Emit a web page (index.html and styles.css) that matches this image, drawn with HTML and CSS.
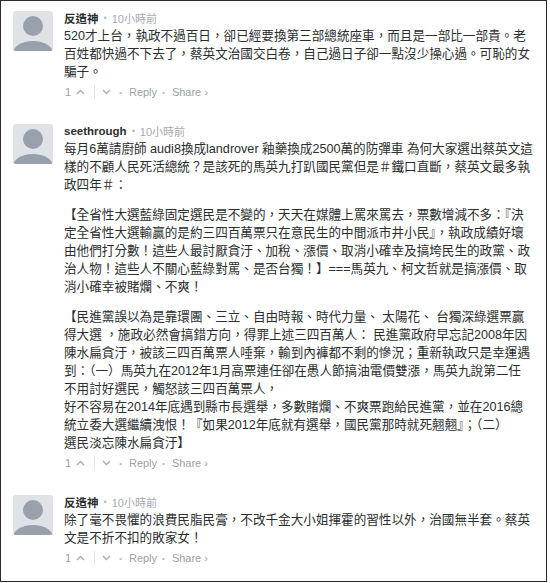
FILE: index.html
```html
<!DOCTYPE html>
<html lang="zh-Hant">
<head>
    <meta charset="UTF-8">
    <title>留言</title>
    <link rel="stylesheet" href="styles.css">
</head>
<body>

    <div class="frame">
        <div class="comment">
            <div class="avatar">
                <svg width="40" height="40" viewBox="0 0 40 40"><circle cx="20" cy="15" r="10"/><ellipse cx="20" cy="44" rx="21" ry="14"/></svg>
            </div>
            <div class="body">
                <div class="head"><span class="name">反造神</span><span class="dot">•</span><span class="time">10小時前</span></div>
                <div class="text">
                    <p>520才上台，執政不過百日，卻已經要換第三部總統座車，而且是一部比一部貴。老<br>百姓都快過不下去了，蔡英文治國交白卷，自己過日子卻一點沒少操心過。可恥的女<br>騙子。</p>
                </div>
                <div class="actions">
                    <span class="count">1</span>
                    <svg class="up" width="9" height="6" viewBox="0 0 9 6"><path d="M1 5 L4.5 1.5 L8 5"/></svg>
                    <span class="sep"></span>
                    <svg class="down" width="9" height="6" viewBox="0 0 9 6"><path d="M1 1 L4.5 4.5 L8 1"/></svg>
                    <span class="dot">•</span>
                    <span class="link">Reply</span>
                    <span class="dot">•</span>
                    <span class="link">Share ›</span>
                </div>
            </div>
        </div>

        <div class="comment">
            <div class="avatar">
                <svg width="40" height="40" viewBox="0 0 40 40"><circle cx="20" cy="15" r="10"/><ellipse cx="20" cy="44" rx="21" ry="14"/></svg>
            </div>
            <div class="body">
                <div class="head"><span class="name">seethrough</span><span class="dot">•</span><span class="time">10小時前</span></div>
                <div class="text">
                    <p>每月6萬請廚師 audi8換成landrover 釉藥換成2500萬的防彈車 為何大家選出蔡英文這<br>樣的不顧人民死活總統？是該死的馬英九打趴國民黨但是＃鐵口直斷，蔡英文最多執<br>政四年＃：</p>
                    <p>【全省性大選藍綠固定選民是不變的，天天在媒體上罵來罵去，票數增減不多：『決<br>定全省性大選輸贏的是約三四百萬票只在意民生的中間派市井小民』，執政成績好壞<br>由他們打分數！這些人最討厭貪汙、加稅、漲價、取消小確幸及搞垮民生的政黨、政<br>治人物！這些人不關心藍綠對罵、是否台獨！】===馬英九、柯文哲就是搞漲價、取<br>消小確幸被賭爛、不爽！</p>
                    <p>【民進黨誤以為是靠環團、三立、自由時報、時代力量、 太陽花、 台獨深綠選票贏<br>得大選 ，施政必然會搞錯方向，得罪上述三四百萬人： 民進黨政府早忘記2008年因<br>陳水扁貪汙，被該三四百萬票人唾棄，輸到內褲都不剩的慘況；重新執政只是幸運遇<br>到：（一）馬英九在2012年1月高票連任卻在愚人節搞油電價雙漲，馬英九說第二任<br>不用討好選民，觸怒該三四百萬票人，<br>好不容易在2014年底遇到縣市長選舉，多數賭爛、不爽票跑給民進黨，並在2016總<br>統立委大選繼續洩恨！『如果2012年底就有選舉，國民黨那時就死翹翹』；（二）<br>選民淡忘陳水扁貪汙】</p>
                </div>
                <div class="actions">
                    <span class="count">1</span>
                    <svg class="up" width="9" height="6" viewBox="0 0 9 6"><path d="M1 5 L4.5 1.5 L8 5"/></svg>
                    <span class="sep"></span>
                    <svg class="down" width="9" height="6" viewBox="0 0 9 6"><path d="M1 1 L4.5 4.5 L8 1"/></svg>
                    <span class="dot">•</span>
                    <span class="link">Reply</span>
                    <span class="dot">•</span>
                    <span class="link">Share ›</span>
                </div>
            </div>
        </div>

        <div class="comment">
            <div class="avatar">
                <svg width="40" height="40" viewBox="0 0 40 40"><circle cx="20" cy="15" r="10"/><ellipse cx="20" cy="44" rx="21" ry="14"/></svg>
            </div>
            <div class="body">
                <div class="head"><span class="name">反造神</span><span class="dot">•</span><span class="time">10小時前</span></div>
                <div class="text">
                    <p>除了毫不畏懼的浪費民脂民膏，不改千金大小姐揮霍的習性以外，治國無半套。蔡英<br>文是不折不扣的敗家女！</p>
                </div>
                <div class="actions">
                    <span class="count">1</span>
                    <svg class="up" width="9" height="6" viewBox="0 0 9 6"><path d="M1 5 L4.5 1.5 L8 5"/></svg>
                    <span class="sep"></span>
                    <svg class="down" width="9" height="6" viewBox="0 0 9 6"><path d="M1 1 L4.5 4.5 L8 1"/></svg>
                    <span class="dot">•</span>
                    <span class="link">Reply</span>
                    <span class="dot">•</span>
                    <span class="link">Share ›</span>
                </div>
            </div>
        </div>
    </div>

</body>
</html>
```

FILE: styles.css
```css
*{
    margin:0;
    padding:0;
}

body{
    background: #fff;
    font-family: "Liberation Sans", "Noto Sans CJK TC", sans-serif;
    color: #2a2e2e;
}

.frame{
    box-sizing: border-box;
    width: 547px;
    height: 582px;
    padding: 8px 0 0 12px;
    border: 1px solid #2b2b2b;
    overflow: hidden;
}

.comment{
    display: flex;
    gap: 11px;
    margin-bottom: 20px;
}

.avatar{
    flex: none;
    width: 40px;
    height: 40px;
    margin-top: 2px;
    border-radius: 3px;
    overflow: hidden;
    background: #dfe3e8;
}

.avatar svg{
    display: block;
    fill: #98a1ab;
}

.body{
    flex: 1;
}

.head{
    display: flex;
    align-items: center;
    height: 18px;
    white-space: nowrap;
}

.head .name{
    font-size: 11.5px;
    font-weight: bold;
    color: #2a2e2e;
}

.head .dot{
    margin: 0 5px 0 5px;
    font-size: 9px;
    color: #b3b9bf;
}

.head .time{
    font-size: 11px;
    color: #a3aab1;
}

.text p{
    font-size: 12.6px;
    line-height: 18px;
    white-space: nowrap;
}

.text p + p{
    margin-top: 12px;
}

.actions{
    display: flex;
    align-items: center;
    height: 20px;
    margin-top: 1px;
    padding-left: 1px;
    font-size: 11px;
    color: #9aa1a9;
}

.actions svg{
    fill: none;
    stroke: #a6adb4;
    stroke-width: 1.4;
}

.actions .up{
    margin-left: 5px;
}

.actions .sep{
    width: 1px;
    height: 14px;
    margin: 0 7px 0 9px;
    background: #e3e6e9;
}

.actions .dot{
    margin: 0 7px 0 8px;
    font-size: 8px;
    color: #b8bec4;
}

.actions .link + .dot{
    margin-left: 5px;
}
```
